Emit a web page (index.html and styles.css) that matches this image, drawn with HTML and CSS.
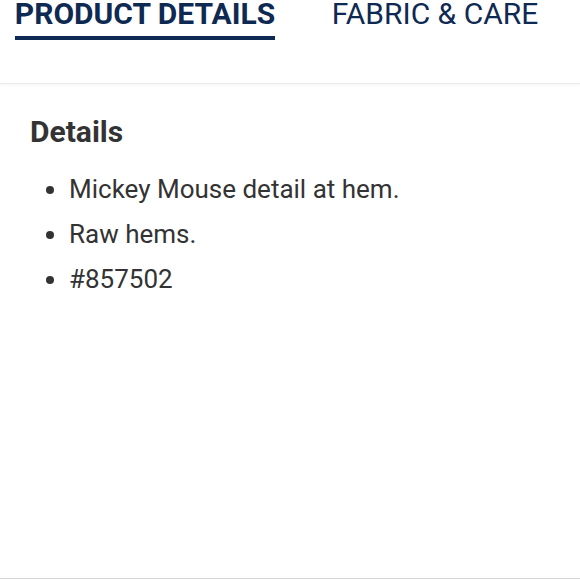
FILE: index.html
```html
<!DOCTYPE html>
<html>
<head>
<meta charset="utf-8">
<link rel="stylesheet" href="styles.css">
</head>
<body>
<div class="page">
  <nav class="tabs">
    <div class="tab"><span class="tab-label active">PRODUCT DETAILS</span></div>
    <div class="tab"><span class="tab-label">FABRIC &amp; CARE</span></div>
  </nav>
  <section class="content">
    <h2 class="heading">Details</h2>
    <ul class="list">
      <li>Mickey Mouse detail at hem.</li>
      <li>Raw hems.</li>
      <li>#857502</li>
    </ul>
  </section>
</div>
</body>
</html>
```
FILE: styles.css
```css
html, body {
  margin: 0;
  padding: 0;
  background: #fff;
}
.page {
  width: 580px;
  height: 579px;
  box-sizing: border-box;
  border-bottom: 1px solid #d6d6d6;
  font-family: Roboto, "Liberation Sans", sans-serif;
  overflow: hidden;
}
.tabs {
  display: flex;
  height: 84px;
  box-sizing: border-box;
  border-bottom: 1px solid #ececec;
  box-shadow: 0 1px 3px rgba(0,0,0,0.05);
}
.tab {
  flex: 1;
  text-align: center;
}
.tab-label {
  display: inline-block;
  font-size: 30px;
  line-height: 35px;
  color: #0f2a52;
  margin-top: -4px;
  padding-bottom: 5px;
}
.tab-label.active {
  font-weight: 700;
  border-bottom: 4px solid #0f2a52;
}
.content {
  padding: 0 30px;
}
.heading {
  margin: 30px 0 0;
  font-size: 30px;
  line-height: 36px;
  font-weight: 700;
  color: #333;
}
.list {
  margin: 17px 0 0;
  padding-left: 39px;
  color: #333;
  font-size: 26px;
  line-height: 45px;
}
```
